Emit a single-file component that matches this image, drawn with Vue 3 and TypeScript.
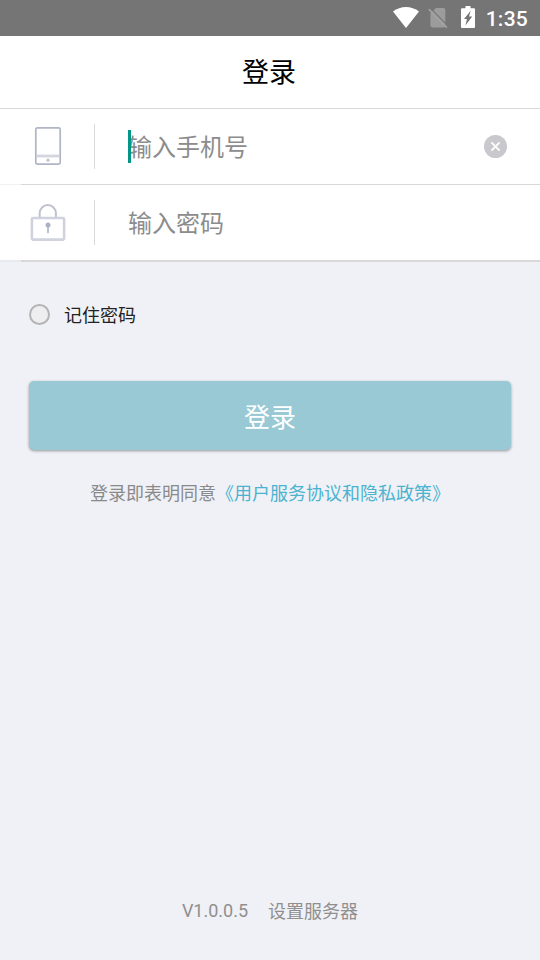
<script setup lang="ts">
import { ref } from 'vue'

const phone = ref<string>('')
const password = ref<string>('')
const remember = ref<boolean>(false)

function clearPhone(): void {
  phone.value = ''
}
</script>

<template>
  <div class="screen">
    <div class="status">
      <svg class="wifi" viewBox="0 0 26 21" aria-hidden="true">
        <path d="M0 4.5C7.6-1.5 18.4-1.5 26 4.5L13 21Z" fill="#fff" />
      </svg>
      <svg class="sim" viewBox="0 0 20 22" aria-hidden="true">
        <path d="M8 1H15.5q1.8 0 1.8 1.8V18.6q0 1.8-1.8 1.8H4.2q-1.8 0-1.8-1.8V6.6Z" fill="#9c9c9c" />
        <path d="M2.2 1.2 20 19.2" stroke="#757575" stroke-width="1.2" />
        <path d="M.8 2.2 18.8 20.6" stroke="#a3a3a3" stroke-width="1.7" />
      </svg>
      <svg class="battery" viewBox="0 0 14 22" aria-hidden="true">
        <path d="M4.5 0h5v2.2H13q1 0 1 1V21q0 1-1 1H1q-1 0-1-1V3.2q0-1 1-1h3.5Z" fill="#fff" />
        <path d="M9.7 4.8 3 13h3L4.4 19.4 11.2 10.6H8Z" fill="#757575" />
      </svg>
      <span class="clock">1:35</span>
    </div>

    <header class="title">登录</header>

    <form class="fields" @submit.prevent>
      <label class="field">
        <span class="icon">
          <svg width="28" height="40" viewBox="0 0 28 40" fill="none" aria-hidden="true">
            <rect x="1.8" y="1.8" width="24.4" height="36.4" rx="1.6" stroke="#b0b5c6" stroke-width="1.7" />
            <path d="M3 30h22" stroke="#d3d5df" stroke-width="2.8" />
            <circle cx="14" cy="34.2" r="1.6" fill="#bfc3d2" />
          </svg>
        </span>
        <span class="entry">
          <input v-model="phone" type="tel" placeholder="输入手机号" />
          <i class="caret"></i>
        </span>
        <button class="clear" type="button" @click="clearPhone">
          <svg width="23" height="23" viewBox="0 0 23 23" aria-hidden="true">
            <circle cx="11.5" cy="11.5" r="11.5" fill="#c8c8cd" />
            <path d="m7.4 7.4 8.2 8.2m0-8.2-8.2 8.2" stroke="#fff" stroke-width="1.8" />
          </svg>
        </button>
      </label>
      <label class="field last">
        <span class="icon">
          <svg width="36" height="38" viewBox="0 0 36 38" fill="none" aria-hidden="true">
            <path d="M9.7 14.6V10.2a8.1 8.1 0 0 1 16.2 0v4.4" stroke="#bec1d0" stroke-width="2" />
            <rect x="1.9" y="15" width="32.2" height="21.6" rx="1.5" stroke="#d0d2de" stroke-width="2.6" />
            <circle cx="18" cy="22" r="2.5" fill="#adb1c4" />
            <path d="M18 22.5v7.8" stroke="#adb1c4" stroke-width="1.6" />
          </svg>
        </span>
        <span class="entry">
          <input v-model="password" type="password" placeholder="输入密码" />
        </span>
      </label>
    </form>

    <label class="remember">
      <input v-model="remember" type="checkbox" />
      <span>记住密码</span>
    </label>

    <button class="submit" type="button">登录</button>

    <p class="agreement">登录即表明同意<a>《用户服务协议和隐私政策》</a></p>

    <footer class="footer">
      <span>V1.0.0.5</span>
      <span class="server">设置服务器</span>
    </footer>
  </div>
</template>

<style>
body {
  margin: 0;
  background: #f0f1f6;
}
</style>

<style scoped>
.screen {
  display: flex;
  flex-direction: column;
  box-sizing: border-box;
  width: 100%;
  height: 100vh;
  overflow: hidden;
  background: #f0f1f6;
  font-family: Roboto, "Noto Sans CJK SC", sans-serif;
}
.status {
  display: flex;
  align-items: flex-start;
  box-sizing: border-box;
  height: 36px;
  flex: none;
  padding: 6px 12px 0 0;
  justify-content: flex-end;
  background: #757575;
}
.wifi {
  width: 26px;
  height: 21px;
  margin: 1px 9px 0 0;
}
.sim {
  width: 20px;
  height: 22px;
  margin: 1px 13px 0 0;
}
.battery {
  width: 14px;
  height: 22px;
  margin-right: 11px;
}
.clock {
  color: #fff;
  font-size: 21px;
  font-weight: 500;
  letter-spacing: 0.25px;
  line-height: 26px;
}
.title {
  flex: none;
  box-sizing: border-box;
  height: 73px;
  padding: 2px 2px 0 0;
  border-bottom: 1px solid #d9d9d9;
  background: #fff;
  color: #000;
  font-size: 27px;
  line-height: 71px;
  text-align: center;
}
.fields {
  flex: none;
  background: #fff;
}
.field {
  display: flex;
  align-items: center;
  box-sizing: border-box;
  height: 76px;
  padding-right: 33px;
  border-bottom: 1px solid;
  border-image: linear-gradient(to right, #f0f1f3 22px, #d8d8d8 22px) 1;
}
.field.last {
  height: 77px;
  border-bottom-width: 2px;
  border-image: linear-gradient(to right, #e9eaef 22px, #d8d8d8 22px) 1;
}
.icon {
  display: flex;
  align-items: center;
  justify-content: center;
  box-sizing: border-box;
  width: 95px;
  height: 45px;
  padding: 0 0 2px 1px;
  border-right: 1px solid #d9d9d9;
}
.entry {
  position: relative;
  display: flex;
  flex: 1;
  min-width: 0;
  margin-left: 33px;
}
.entry input {
  width: 100%;
  height: 38px;
  padding: 2px 0 0;
  border: 0;
  outline: 0;
  background: transparent;
  color: #222;
  font: 24px/36px Roboto, "Noto Sans CJK SC", sans-serif;
}
.entry input::placeholder {
  color: #8c8c8c;
  opacity: 1;
}
.caret {
  position: absolute;
  top: 3px;
  left: 0;
  width: 3px;
  height: 33px;
  background: #009688;
}
.clear {
  display: flex;
  padding: 0;
  border: 0;
  background: none;
}
.remember {
  display: flex;
  flex: none;
  align-items: center;
  gap: 14px;
  margin: 39px 0 0 29px;
  height: 27px;
  color: #222;
  font-size: 18px;
  line-height: 26px;
}
.remember span {
  padding-top: 3px;
}
.remember input {
  appearance: none;
  box-sizing: border-box;
  width: 21px;
  height: 21px;
  margin: 0;
  border: 2px solid #b4b4b4;
  border-radius: 50%;
  background: #eeeef0;
}
.remember input:checked {
  background: #98c9d5;
}
.submit {
  flex: none;
  height: 69px;
  margin: 53px 29px 0;
  padding: 5px 0 0;
  border: 0;
  border-radius: 5px;
  background: #98c9d5;
  box-shadow: 0 1px 3px rgba(0, 0, 0, 0.38);
  color: #fff;
  font: 26px/64px Roboto, "Noto Sans CJK SC", sans-serif;
}
.agreement {
  flex: none;
  margin: 31px 0 0;
  color: #8a8a8a;
  font-size: 18px;
  line-height: 26px;
  text-align: center;
}
.agreement a {
  color: #4bb3d0;
}
.footer {
  display: flex;
  justify-content: center;
  gap: 20px;
  margin: auto 0 35px;
  color: #8f8f8f;
  font-size: 18px;
  line-height: 26px;
}
.server {
  padding-top: 1px;
}
</style>
